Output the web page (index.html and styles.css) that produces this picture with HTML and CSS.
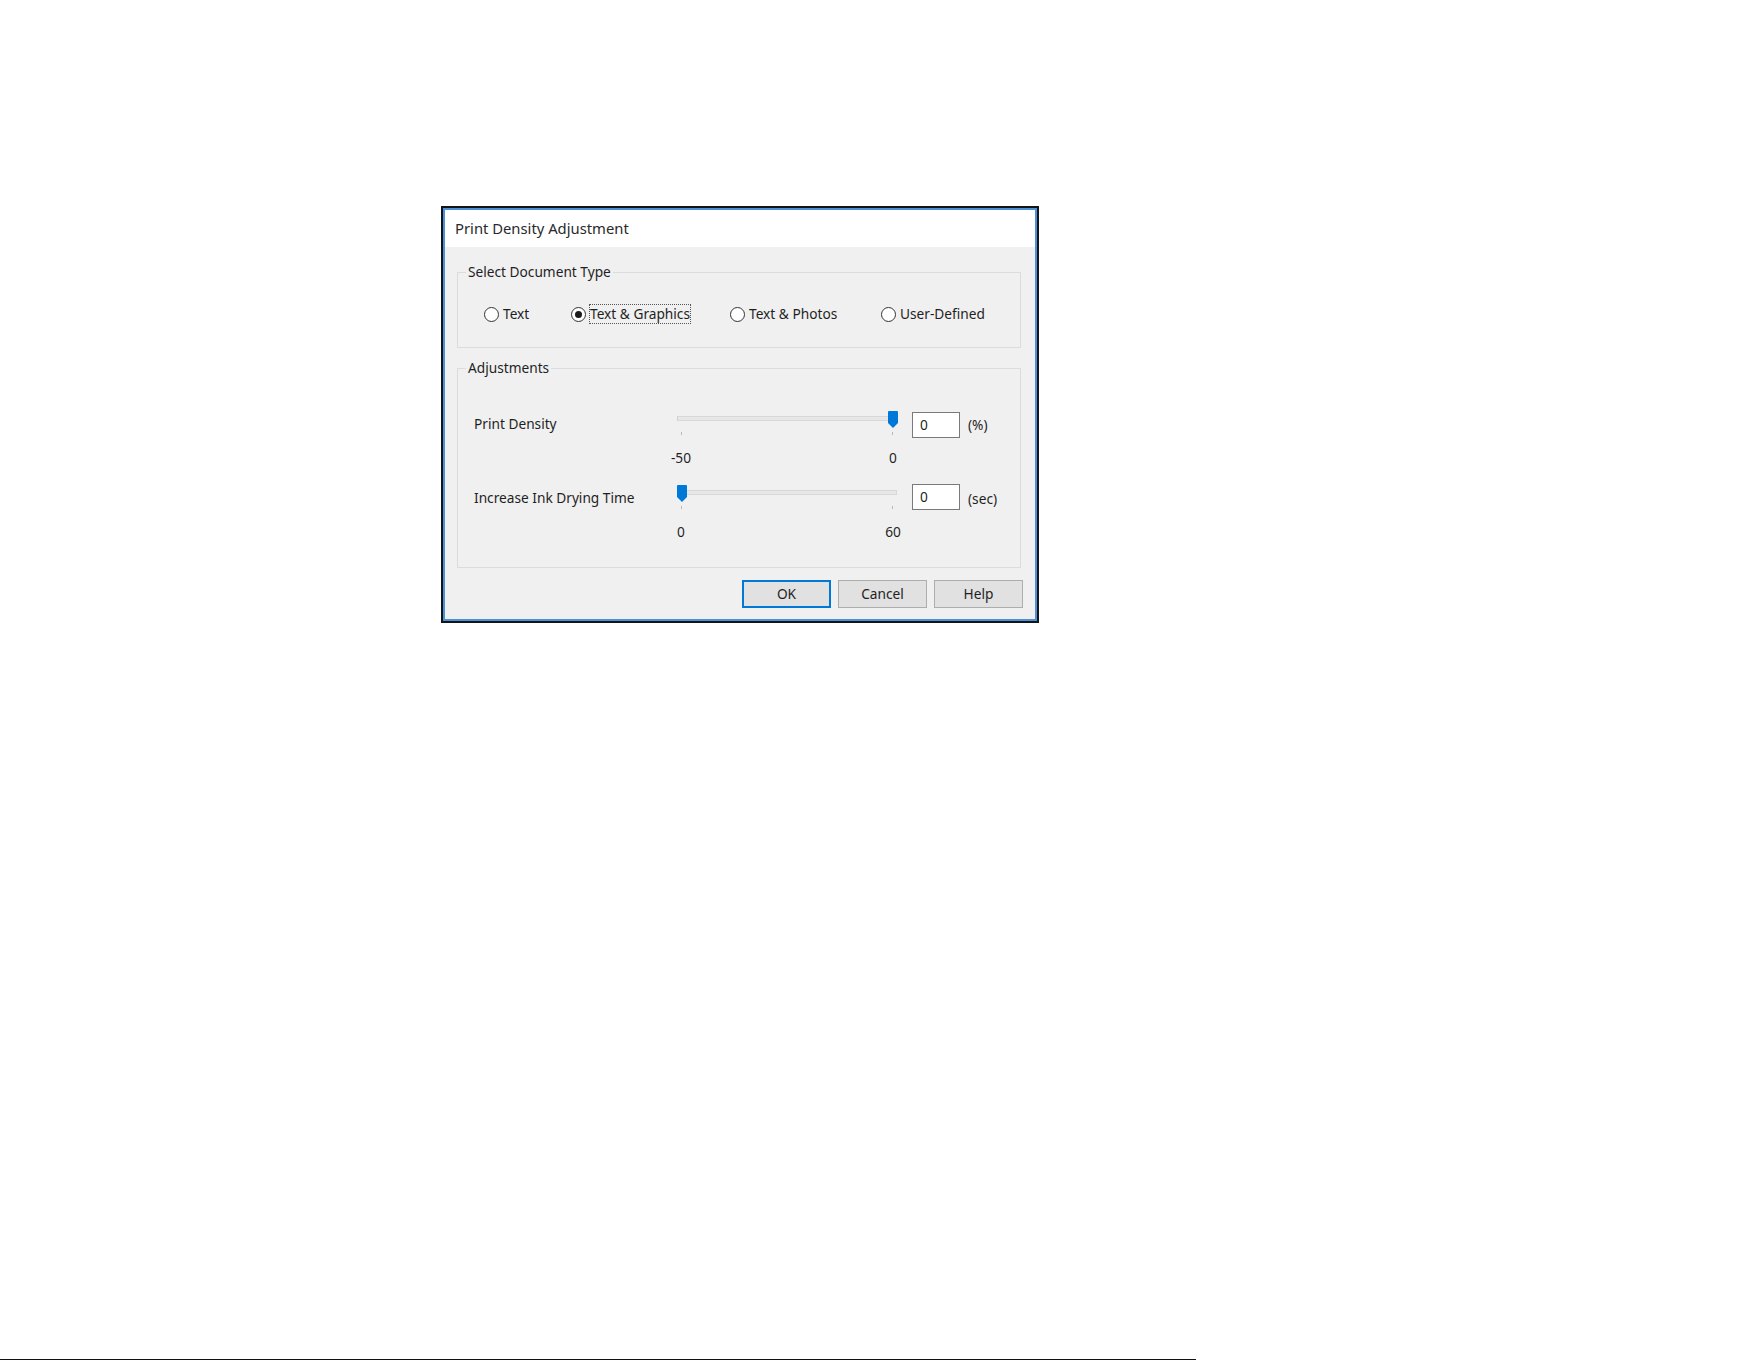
FILE: index.html
```html
<!DOCTYPE html>
<html lang="en">
<head>
<meta charset="utf-8">
<title>Print Density Adjustment</title>
<link rel="stylesheet" href="styles.css">
</head>
<body>
<div class="dialog">
  <div class="frame">
    <div class="titlebar">Print Density Adjustment</div>
    <div class="body">
      <fieldset class="group group-type">
        <legend>Select Document Type</legend>
        <div class="radios">
          <label class="radio r1"><span class="circle"></span><span class="rtext">Text</span></label>
          <label class="radio r2"><span class="circle checked"></span><span class="rtext focus">Text &amp; Graphics</span></label>
          <label class="radio r3"><span class="circle"></span><span class="rtext">Text &amp; Photos</span></label>
          <label class="radio r4"><span class="circle"></span><span class="rtext">User-Defined</span></label>
        </div>
      </fieldset>
      <fieldset class="group group-adj">
        <legend>Adjustments</legend>
        <div class="rows">
          <div class="row">
            <div class="row-label">Print Density</div>
            <div class="slider">
              <div class="track"></div>
              <div class="thumb" style="left: 211px"></div>
              <div class="ticks"><span class="tick"></span><span class="tick"></span></div>
              <div class="scale"><span>-50</span><span>0</span></div>
            </div>
            <div class="edit">0</div>
            <div class="unit">(%)</div>
          </div>
          <div class="row">
            <div class="row-label">Increase Ink Drying Time</div>
            <div class="slider">
              <div class="track"></div>
              <div class="thumb" style="left: 0px"></div>
              <div class="ticks"><span class="tick"></span><span class="tick"></span></div>
              <div class="scale"><span>0</span><span>60</span></div>
            </div>
            <div class="edit">0</div>
            <div class="unit">(sec)</div>
          </div>
        </div>
      </fieldset>
      <div class="buttons">
        <div class="btn default">OK</div>
        <div class="btn">Cancel</div>
        <div class="btn">Help</div>
      </div>
    </div>
  </div>
</div>
<div class="pageline"></div>
</body>
</html>
```

FILE: styles.css
```css
html, body {
  margin: 0;
  padding: 0;
  background: #ffffff;
}
body {
  font-family: "Noto Sans", "Open Sans", sans-serif;
  font-size: 13.7px;
  color: #1f1f1f;
  width: 1761px;
  height: 1361px;
  overflow: hidden;
}
.dialog {
  margin: 206px 0 0 441px;
  width: 598px;
  box-sizing: border-box;
  border: 2px solid #141414;
}
.frame {
  border: 2px solid #4a91d9;
  background: #f0f0f0;
}
.titlebar {
  height: 37px;
  background: #ffffff;
  line-height: 36px;
  padding-left: 10px;
  font-size: 14.8px;
  color: #2a2a2a;
}
.body {
  padding: 15px 14px 11px 12px;
}
.group {
  margin: 0;
  border: 1px solid #dcdcdc;
  padding: 0;
  min-width: 0;
}
.group legend {
  margin-left: 8px;
  padding: 0 2px;
  line-height: 20px;
  height: 20px;
}
.group-type {
  padding: 22px 0 23px 0;
}
.radios {
  display: flex;
  height: 20px;
  align-items: center;
  padding-left: 26px;
}
.radio {
  display: flex;
  align-items: center;
  gap: 4px;
  height: 20px;
}
.r1 { width: 87px; }
.r2 { width: 159px; }
.r3 { width: 151px; }
.r4 { width: 125px; }
.circle {
  width: 13px;
  height: 13px;
  border: 1px solid #333333;
  border-radius: 50%;
  background: #ffffff;
  display: flex;
  align-items: center;
  justify-content: center;
  flex: none;
}
.circle.checked::after {
  content: "";
  width: 7px;
  height: 7px;
  border-radius: 50%;
  background: #1a1a1a;
}
.rtext {
  line-height: 18px;
}
.rtext.focus {
  outline: 1px dotted #555555;
  outline-offset: 0;
}
.group-adj {
  margin-top: 10px;
  padding: 34px 0 7px 0;
}
.rows {
  padding-left: 16px;
}
.row {
  display: flex;
  height: 74px;
  align-items: flex-start;
}
.row-label {
  width: 203px;
  line-height: 20px;
  margin-top: 2px;
}
.slider {
  position: relative;
  width: 220px;
  height: 60px;
}
.track {
  margin-top: 4px;
  height: 3px;
  background: #e7e7e7;
  border: 1px solid #d8d8d8;
  border-left-color: #cfcfcf;
}
.thumb {
  position: absolute;
  top: -1px;
  width: 10px;
  height: 12px;
  background: #0078d7;
  border-radius: 1px 1px 0 0;
}
.thumb::after {
  content: "";
  position: absolute;
  left: 0;
  top: 12px;
  border-left: 5px solid transparent;
  border-right: 5px solid transparent;
  border-top: 5px solid #0078d7;
}
.ticks {
  display: flex;
  justify-content: space-between;
  padding: 0 4px;
  margin-top: 11px;
  height: 3px;
}
.tick {
  width: 1px;
  height: 3px;
  background: #b8b8b8;
}
.scale {
  display: flex;
  justify-content: space-between;
  margin: 15px -11px 0;
  line-height: 16px;
}
.scale span {
  width: 30px;
  text-align: center;
}
.edit {
  margin-left: 15px;
  margin-top: 0;
  width: 48px;
  height: 26px;
  box-sizing: border-box;
  border: 1px solid #7a7a7a;
  background: #ffffff;
  padding-left: 7px;
  line-height: 24px;
}
.row + .row .edit {
  margin-top: -2px;
}
.unit {
  margin-left: 8px;
  margin-top: 3px;
  line-height: 20px;
}
.buttons {
  display: flex;
  justify-content: flex-end;
  gap: 7px;
  margin-top: 12px;
  margin-right: -2px;
}
.btn {
  width: 89px;
  height: 28px;
  box-sizing: border-box;
  border: 1px solid #adadad;
  background: #e1e1e1;
  text-align: center;
  line-height: 26px;
}
.btn.default {
  border: 2px solid #0078d7;
  line-height: 24px;
}
.pageline {
  margin-top: 736px;
  width: 1196px;
  height: 1px;
  background: #111111;
}
```
